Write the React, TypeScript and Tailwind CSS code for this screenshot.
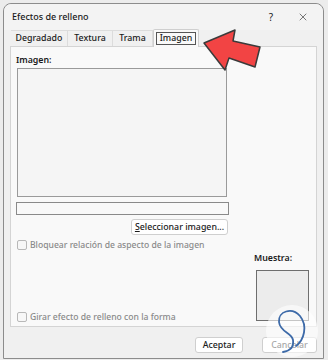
import { X } from "lucide-react";

const font = { fontFamily: '"Noto Sans", "Open Sans", sans-serif' };

const Tab = ({ label, width, active }: { label: string; width: string; active?: boolean }) =>
  active ? (
    <div className={`${width} h-[18px] -mb-px flex items-center justify-center bg-[#f9f9f9] border border-b-0 border-[#cfcfcf] rounded-t-[2px] z-10`}>
      <span className="px-[3px] h-[13px] flex items-center border border-[#555] text-[8.8px] font-medium leading-none text-[#1a1a1a] whitespace-nowrap">
        {label}
      </span>
    </div>
  ) : (
    <div className={`${width} h-[16px] flex items-center justify-center border-t border-r border-[#dcdcdc] bg-[#f0f0f0] text-[8.8px] font-medium leading-none text-[#1a1a1a] whitespace-nowrap`}>
      {label}
    </div>
  );

const Check = ({ label }: { label: string }) => (
  <div className="flex items-center gap-[3px] h-[10px]">
    <div className="w-[10px] h-[10px] rounded-[2px] border border-[#b8b8b8] bg-[#f7f7f7]" />
    <span className="text-[8.6px] font-medium leading-none text-[#8a8a8a] whitespace-nowrap">{label}</span>
  </div>
);

export default function App() {
  return (
    <div
      className="relative w-[328px] h-[360px] overflow-hidden bg-[#ececec] pt-[3px] pl-[3px]"
      style={font}
    >
      <div className="w-[321px] h-[356px] flex flex-col rounded-t-[8px] border border-[#8c8c8c] bg-[#f0f0f0]">
        {/* title bar */}
        <div className="h-[26px] flex items-center pl-[8px] pr-[14px] bg-[#f3f3f3] rounded-t-[8px]">
          <span className="text-[9px] font-medium text-[#1a1a1a]">Efectos de relleno</span>
          <span className="ml-auto text-[10px] text-[#1a1a1a]">?</span>
          <X className="ml-[24px] w-[12px] h-[12px] text-[#222]" strokeWidth={1.2} />
        </div>

        {/* tabs */}
        <div className="flex items-end pl-[7px] h-[16px]">
          <Tab label="Degradado" width="w-[57px]" />
          <Tab label="Textura" width="w-[45px]" />
          <Tab label="Trama" width="w-[40px]" />
          <Tab label="Imagen" width="w-[46px]" active />
        </div>

        {/* panel */}
        <div className="mx-[6px] h-[281px] flex flex-col border border-[#d4d4d4] bg-[#f9f9f9] pl-[5px] pr-[7px] pt-[7px]">
          <div className="h-[14px] flex items-center text-[8.8px] font-semibold text-[#1a1a1a]">Imagen:</div>
          <div className="ml-[1px] w-[210px] h-[129px] border border-[#9a9a9a] bg-[#f5f5f5]" />
          <div className="mt-[5px] w-[213px] h-[13px] border border-[#8a8a8a] bg-[#f9f9f9]" />
          <div className="mt-[4px] ml-[115px] w-[97px] h-[16px] flex items-center justify-center rounded-[3px] border border-[#cfcfcf] bg-white text-[8.8px] font-medium leading-none text-[#1a1a1a] whitespace-nowrap">
            <span><span className="underline">S</span>eleccionar imagen...</span>
          </div>
          <div className="mt-[5px] ml-[1px]">
            <Check label="Bloquear relación de aspecto de la imagen" />
          </div>
          <div className="flex items-end justify-between mt-[2px]">
            <div className="ml-[1px] mb-[-1px]">
              <Check label="Girar efecto de relleno con la forma" />
            </div>
            <div className="flex flex-col">
              <div className="h-[14px] flex items-center text-[8.8px] font-semibold text-[#1a1a1a]">Muestra:</div>
              <div className="mt-[4px] ml-[2px] w-[53px] h-[51px] border-[1.5px] border-[#6e6e6e] bg-[#ececec]" />
            </div>
          </div>
        </div>

        {/* buttons */}
        <div className="flex justify-end gap-[19px] pr-[6px] mt-[10px]">
          <div className="w-[48px] h-[16px] flex items-center justify-center rounded-[3px] border border-[#cfcfcf] bg-white text-[8.8px] font-medium leading-none text-[#1a1a1a]">
            Aceptar
          </div>
          <div className="w-[55px] h-[16px] flex items-center justify-center rounded-[3px] border border-[#cfcfcf] bg-white text-[8.8px] font-medium leading-none text-[#1a1a1a]">
            Cancelar
          </div>
        </div>
      </div>

      {/* red arrow pointing at the Imagen tab */}
      <svg className="absolute left-0 top-0" width="328" height="360" viewBox="0 0 328 360">
        <polygon
          points="204,43 235,30 233,41 260,47 255,67 229,58 225,70"
          fill="#f24444"
          stroke="#3a3a3a"
          strokeWidth="1.5"
          strokeLinejoin="round"
        />
        {/* watermark */}
        <circle cx="292" cy="331" r="26" fill="#ffffff" fillOpacity="0.6" />
        <path
          d="M296 346 C 304 340, 308 326, 300 316 C 292 307, 278 311, 279 322 C 280 332, 292 333, 293 340 C 294 347, 290 351, 283 352"
          fill="none"
          stroke="#3d6aa8"
          strokeWidth="1.8"
          strokeLinecap="round"
        />
      </svg>
    </div>
  );
}
